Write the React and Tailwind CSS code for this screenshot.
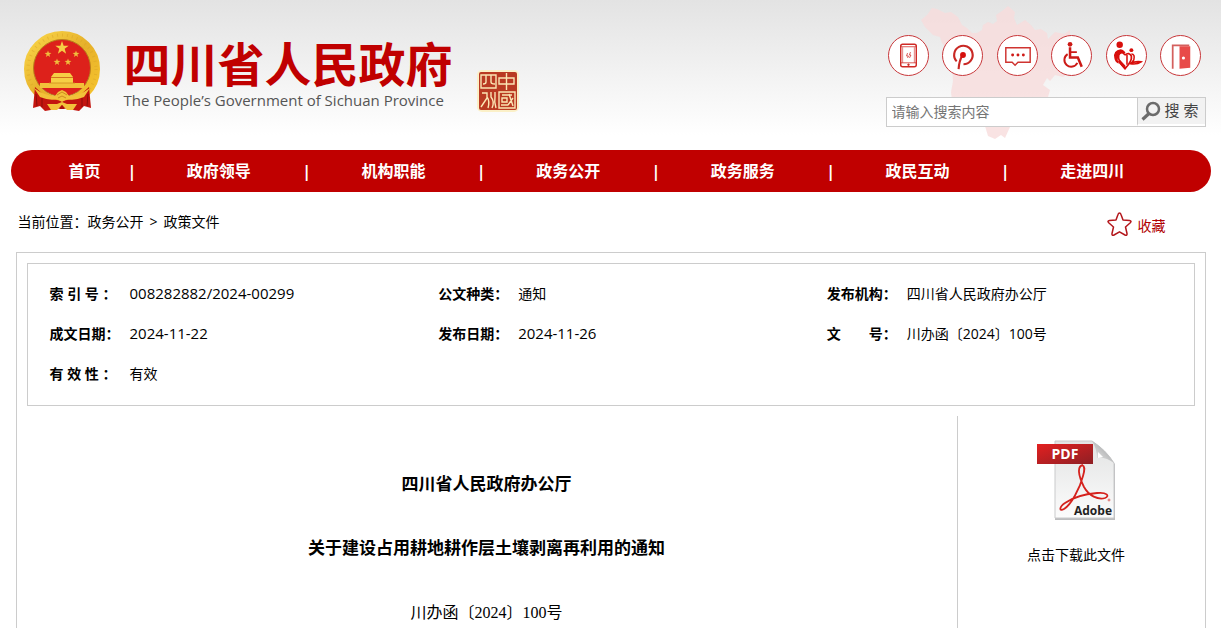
import React, { useState } from "react";

const navItems = ["政府领导", "机构职能", "政务公开", "政务服务", "政民互动", "走进四川"];

const infoRows = [
  [
    { label: "索 引 号 ：", value: "008282882/2024-00299", numeric: true },
    { label: "公文种类：", value: "通知" },
    { label: "发布机构：", value: "四川省人民政府办公厅" }
  ],
  [
    { label: "成文日期：", value: "2024-11-22", numeric: true },
    { label: "发布日期：", value: "2024-11-26", numeric: true },
    { label: "文　　号：", value: "川办函〔2024〕100号" }
  ],
  [{ label: "有 效 性 ：", value: "有效" }]
];

const starPoints = (cx, cy, r) => {
  const points = [];
  for (let i = 0; i < 10; i++) {
    const radius = i % 2 === 0 ? r : r * 0.4;
    const angle = (Math.PI / 5) * i - Math.PI / 2;
    points.push(`${cx + radius * Math.cos(angle)},${cy + radius * Math.sin(angle)}`);
  }
  return points.join(" ");
};

const Emblem = () => (
  <svg width="78" height="82" viewBox="0 0 78 82" aria-hidden="true">
    <defs>
      <linearGradient id="gold" x1="0" y1="0" x2="1" y2="1">
        <stop offset="0" stopColor="#f9d548" />
        <stop offset="0.5" stopColor="#e6b02a" />
        <stop offset="1" stopColor="#f7c52e" />
      </linearGradient>
    </defs>
    <circle cx="39" cy="39" r="33" fill="none" stroke="url(#gold)" strokeWidth="10" />
    <circle cx="39" cy="39" r="34" fill="none" stroke="#d9a326" strokeWidth="3" strokeDasharray="1 4" opacity="0.5" />
    <circle cx="39" cy="38" r="28.500" fill="#dd211b" stroke="#b8801b" strokeWidth="1" />
    <polygon points={starPoints(39, 18, 7)} fill="#f6cf45" />
    <polygon points={starPoints(25, 24, 3.6)} fill="#f0bd3d" />
    <polygon points={starPoints(53, 24, 3.6)} fill="#f0bd3d" />
    <polygon points={starPoints(34, 32, 3.6)} fill="#f0bd3d" />
    <polygon points={starPoints(45, 32, 3.6)} fill="#f0bd3d" />
    <path d="M31 43 H47 L50 47 H28 Z M28 48 H50 V53 H28 Z" fill="#f6cf45" />
    <path d="M17 53 H61 V58 H17 Z" fill="#f2c13a" />
    <path d="M28 47.500 H50 M26 53 H52" stroke="#cf8a20" strokeWidth="0.800" />
    <path d="M12 57 L10 78 L17 76 L22 81 L39 78 L56 81 L61 76 L68 78 L66 57 L54 68 L39 71 L24 68 Z" fill="#c3150f" />
    <path d="M13 64 L14 76 M19 68 L19 77 M59 68 L59 77 M65 64 L64 76" stroke="#8e0d0a" strokeWidth="1" />
    <path d="M11 58 Q22 66 32 66 L35 62 L39 60 L43 62 L46 66 Q56 66 67 58 L61 67 Q51 71 44 69 L39 72 L34 69 Q27 71 17 67 Z" fill="#f2c13a" />
    <path d="M34 65 L39 62 L44 65 M35 68 L39 66 L43 68" stroke="#cf8a20" strokeWidth="1" fill="none" />
    <path d="M24 74 L34 74 L39 72 L44 74 L54 74 L50 80 H44 L39 75 L34 80 H28 Z" fill="#f2c13a" />
    <path d="M36 79 L39 75 L42 79 Z" fill="#a90f0c" />
  </svg>
);

const Seal = () => (
  <svg width="42" height="42" viewBox="0 0 42 42" role="img" aria-label="中国四川">
    <rect width="42" height="42" rx="5" fill="#fbf0c8" />
    <rect x="2" y="2" width="38" height="38" rx="2" fill="#b93a22" />
    <g fill="none" stroke="#fbe6b4" strokeWidth="1.400">
      <path d="M4 5 H19 V18 H4 Z M9 5 V12 Q9 14 6 14 M14 5 V12 Q14 14 18 14" />
      <path d="M22 8 H37 V14 H22 Z M29.500 3 V20" />
      <path d="M5 23 H10 V28 Q8 31 4 37 M10 27 Q13 31 11 38 M14 22 V27 Q18 32 15 38 M18 22 V27 Q17 32 19 38" />
      <path d="M22 22 H38 V38 H22 Z M25 25 H35 M25 28 H30 V32 H25 Z M24 35 H31 M32 24 L36 36 M36 28 L31 35" />
    </g>
  </svg>
);

const ProvinceMap = () => (
  <svg width="150" height="136" viewBox="0 0 150 136" aria-hidden="true">
    <path
      d="M0 14 L6 9 L11 2 L16 3 L24 7 L30 6 L37 11 L41 19 L46 22 L51 27 L56 27 L61 24 L62 19 L67 16 L72 18 L76 15 L75 9 L81 5 L87 0 L94 6 L93 12 L96 19 L104 14 L110 19 L114 24 L120 23 L126 27 L127 33 L134 26 L143 28 L149 24 L149 66 L142 71 L134 69 L129 75 L126 72 L122 79 L129 84 L127 91 L112 92 L98 96 L92 108 L89 121 L84 132 L80 129 L74 133 L67 130 L64 120 L58 108 L45 99 L31 94 L30 86 L32 75 L31 61 L27 50 L27 44 L21 37 L19 31 L12 29 L4 21 Z"
      fill="#f8dcdc"
      opacity="0.800"
    />
  </svg>
);

const PhoneIcon = () => (
  <svg width="40" height="40" viewBox="0 0 40 40" fill="none" stroke="#cf2a26" aria-hidden="true">
    <rect x="12" y="8" width="16" height="23" rx="2" strokeWidth="1.500" />
    <path d="M12 10.500 H28 M12 27 H28" strokeWidth="0.800" />
    <path d="M14 11 V27 M26 11 V27" strokeWidth="0.600" />
    <path d="M19 17 L18 20 H20 L19 22 M22 16 L21 19 H22.500 L21 22" strokeWidth="0.800" />
    <circle cx="20" cy="29" r="0.800" fill="#cf2a26" />
  </svg>
);

const PodcastIcon = () => (
  <svg width="40" height="40" viewBox="0 0 40 40" fill="none" stroke="#c92824" aria-hidden="true">
    <path d="M14 25.500 A9.500 9.500 0 1 1 21 28.500" strokeWidth="2.200" />
    <path d="M20 19 Q16.500 25 16 33.500" strokeWidth="2.200" />
    <circle cx="20.500" cy="19" r="3" fill="#d6100d" stroke="none" />
  </svg>
);

const MessageIcon = () => (
  <svg width="40" height="40" viewBox="0 0 40 40" fill="none" stroke="#cf3431" aria-hidden="true">
    <path d="M8 11.500 H33 V26.500 H20.500 L17.500 29.500 L14.500 26.500 H8 Z" strokeWidth="1.500" />
    <g fill="#cf1a17" stroke="none">
      <circle cx="15" cy="19" r="1.500" />
      <circle cx="20.500" cy="19" r="1.500" />
      <circle cx="26" cy="19" r="1.500" />
    </g>
  </svg>
);

const WheelchairIcon = () => (
  <svg width="40" height="40" viewBox="0 0 40 40" fill="none" stroke="#cc1a16" aria-hidden="true">
    <circle cx="18.500" cy="8" r="2.400" fill="#cc1a16" stroke="none" />
    <path d="M18.500 11 V21.500 H26.500 L30.500 31" strokeWidth="2.600" />
    <path d="M19 16 H25.500" strokeWidth="1.800" />
    <path d="M16 18 A7 7 0 1 0 26 27" strokeWidth="2" />
  </svg>
);

const CareIcon = () => (
  <svg width="40" height="40" viewBox="0 0 40 40" fill="none" stroke="#d80f0c" aria-hidden="true">
    <circle cx="13" cy="8.500" r="3.300" fill="#d80f0c" stroke="none" />
    <circle cx="25" cy="14" r="2" fill="#d80f0c" stroke="none" />
    <path d="M14 13 Q6 14 7.500 22 Q8 26 12 28 L11 24 Q11 16 19 17 Q18 14 14 13 Z" fill="#d80f0c" stroke="none" />
    <path d="M18.500 19 Q14.500 13.500 12 19 Q10.500 25 18.500 33 Q26 25 25 20 Q22.500 15.500 18.500 19" strokeWidth="1.800" />
    <path d="M11 26 L18.500 34 L19 30 L13.500 24 Z" fill="#d80f0c" stroke="none" />
    <path d="M20.500 19 V29 M25 18 Q29 18 27.500 24 Q26 27 23 28 Q29 25 35 26 Q31 29 24 28" strokeWidth="1.600" />
  </svg>
);

const DoorIcon = () => (
  <svg width="40" height="40" viewBox="0 0 40 40" aria-hidden="true">
    <path d="M12 33 V9 H29" fill="none" stroke="#d4605e" strokeWidth="1.800" />
    <path d="M19 10 H30 V32 L19 33 Z" fill="#e84b49" />
    <circle cx="23" cy="22" r="1.600" fill="#fff" />
  </svg>
);

const quickLinks = [
  { name: "移动版", icon: <PhoneIcon /> },
  { name: "公众号", icon: <PodcastIcon /> },
  { name: "留言", icon: <MessageIcon /> },
  { name: "无障碍", icon: <WheelchairIcon /> },
  { name: "关怀版", icon: <CareIcon /> },
  { name: "登录", icon: <DoorIcon /> }
];

const PdfIcon = () => (
  <svg width="78" height="81" viewBox="0 0 78 81" aria-hidden="true">
    <defs>
      <linearGradient id="page" x1="0" y1="0" x2="0" y2="1">
        <stop offset="0" stopColor="#e2e3e3" />
        <stop offset="1" stopColor="#fcfcfc" />
      </linearGradient>
      <linearGradient id="banner" x1="0" y1="0" x2="1" y2="1">
        <stop offset="0" stopColor="#e32020" />
        <stop offset="1" stopColor="#8e1f24" />
      </linearGradient>
      <linearGradient id="fold" x1="0" y1="1" x2="1" y2="0">
        <stop offset="0" stopColor="#f3f3f3" />
        <stop offset="1" stopColor="#8f9192" />
      </linearGradient>
    </defs>
    <path d="M18 2 H55 L78 24 V80 H18 Z" fill="#bcbdbe" />
    <path d="M18 1 H55 Q69 10 77 23 V78 H18 Z" fill="url(#page)" stroke="#c9cacb" strokeWidth="1" />
    <path d="M55 1 Q60 9 60 18 Q69 17 77 23 Q69 10 55 1 Z" fill="url(#fold)" />
    <path d="M61 12 L66 17 L61 18 Z" fill="#fff" />
    <rect x="0" y="4" width="56" height="20" fill="url(#banner)" />
    <text x="28" y="19" textAnchor="middle" fontSize="14" fontWeight="700" fill="#fff" fontFamily="Open Sans, sans-serif">PDF</text>
    <path
      d="M46 25 C40 26 41 35 47 47 C52 56 61 60 68 58 C73 56 70 52 60 53 C48 54 35 58 28 63 C22 67 22 72 27 69 C34 65 43 48 46 36 C48 29 48 26 45 25"
      fill="none"
      stroke="#d5221d"
      strokeWidth="1.800"
    />
    <circle cx="72" cy="60" r="1" fill="none" stroke="#d5221d" strokeWidth="0.600" />
    <text x="75" y="75" textAnchor="end" fontSize="12" fontWeight="700" fill="#222" fontFamily="Open Sans, sans-serif">Adobe</text>
  </svg>
);

const Header = () => {
  const [keyword, setKeyword] = useState("");

  return (
    <header className="bg-linear-to-b from-[#e3e3e3] to-white to-90%">
      <div className="relative mx-auto flex h-[150px] max-w-[1200px] justify-between px-[5px]">
        {/* Logo */}
        <a href="#" className="flex items-start pt-[30px] pl-[7px]">
          <Emblem />
          <div className="ml-[23px] mt-2">
            <h1 className="text-[47px] leading-[52px] font-bold text-[#c00000]">四川省人民政府</h1>
            <p className="text-[15px] leading-5 text-[#555]">The People’s Government of Sichuan Province</p>
          </div>
          <span className="mt-10 ml-6">
            <Seal />
          </span>
        </a>

        <div className="absolute top-1.5 right-[140px]">
          <ProvinceMap />
        </div>

        {/* Quick links and search */}
        <div className="relative w-[320px] pt-[35px]">
          <ul className="flex justify-between pr-1 pl-0.5">
            {quickLinks.map((item) => (
              <li key={item.name}>
                <a
                  href="#"
                  aria-label={item.name}
                  className="flex size-[41px] items-center justify-center overflow-hidden rounded-full border border-[#c8373a] bg-white"
                >
                  {item.icon}
                </a>
              </li>
            ))}
          </ul>
          <form className="mt-[21px] flex h-[30px] border border-[#ccc] bg-white" onSubmit={(e) => e.preventDefault()}>
            <input
              type="text"
              aria-label="请输入搜索内容"
              placeholder="请输入搜索内容"
              value={keyword}
              onChange={(e) => setKeyword(e.target.value)}
              className="min-w-0 flex-1 px-[5px] text-sm outline-none placeholder:text-[#757575]"
            />
            <button
              type="submit"
              className="flex w-[68px] items-center gap-1 border-b-2 border-l border-b-white border-l-[#ccc] bg-[#f2f2f2] pl-[3px] text-[15px] text-[#444]"
            >
              <svg width="20" height="20" viewBox="0 0 20 20" fill="none" stroke="#6b6b6b" aria-hidden="true">
                <circle cx="12" cy="8" r="6" strokeWidth="2.500" />
                <path d="M8 12.500 L1.500 18.500" strokeWidth="3.200" />
              </svg>
              <span className="whitespace-nowrap">搜 索</span>
            </button>
          </form>
        </div>
      </div>
    </header>
  );
};

const NavBar = () => (
  <nav className="mx-auto w-full max-w-[1200px]">
    <ul className="flex h-[42px] items-center rounded-full bg-[#c00000] pr-[35px] pl-[31px] text-base font-bold text-white">
      <li className="w-[86px] text-center">
        <a href="#">首页</a>
      </li>
      {navItems.map((item) => (
        <li key={item} className="flex flex-1 items-center">
          <span className="w-2 text-center">|</span>
          <a href="#" className="flex-1 text-center">{item}</a>
        </li>
      ))}
    </ul>
  </nav>
);

const App = () => {
  return (
    <div lang="zh-CN" className="flex min-h-screen flex-col bg-white font-['Open_Sans','Noto_Sans_CJK_SC',sans-serif] text-sm text-black">
      <Header />
      <NavBar />

      <main className="mx-auto flex w-full max-w-[1200px] flex-1 flex-col px-[5px]">
        {/* Breadcrumb */}
        <div className="flex h-[60px] items-center justify-between pr-10 pl-0.5">
          <p className="flex">
            当前位置：<a href="#">政务公开</a>
            <span className="px-1.5">&gt;</span>
            <a href="#">政策文件</a>
          </p>
          <button className="flex items-center gap-1.5 pt-1 text-[#b00000]">
            <svg width="25" height="25" viewBox="0 0 25 25" fill="none" stroke="#b3161b" strokeWidth="1.500" strokeLinejoin="round" aria-hidden="true">
              <path d="M12.500 1 Q13.500 1 14 2.500 L16 8 L22.500 8.500 Q25 9 23.300 10.700 L18.500 15 L20 21.500 Q20.300 24 18 23 L12.500 19.800 L7 23 Q4.700 24 5 21.500 L6.500 15 L1.700 10.700 Q0 9 2.500 8.500 L9 8 L11 2.500 Q11.500 1 12.500 1 Z" />
            </svg>
            <span className="pt-1">收藏</span>
          </button>
        </div>

        <div className="flex flex-1 flex-col border border-b-0 border-[#ccc]">
          {/* Document information */}
          <div className="m-2.5 border border-[#ccc] pt-2.5 pb-[11px]">
            <table className="w-full table-fixed">
              <tbody>
                {infoRows.map((row, index) => (
                  <tr key={index}>
                    {row.map((item) => (
                      <td key={item.label} className="h-10 pl-[22px]">
                        <b className="inline-block w-20 whitespace-nowrap">{item.label}</b>
                        <span className={item.numeric ? "text-[15px]" : "text-sm"}>{item.value}</span>
                      </td>
                    ))}
                  </tr>
                ))}
              </tbody>
            </table>
          </div>

          <div className="flex flex-1">
            <article className="flex-1 pt-[37px] text-center font-['Liberation_Serif','Noto_Sans_CJK_SC',serif]">
              <h2 className="text-[17px] leading-[64px] font-bold">四川省人民政府办公厅</h2>
              <h2 className="text-[17px] leading-[64px] font-bold">关于建设占用耕地耕作层土壤剥离再利用的通知</h2>
              <p className="text-base leading-[64px]">川办函〔2024〕100号</p>
            </article>
            <aside className="mr-2.5 w-[238px] border-l border-[#ccc] pt-6">
              <a href="#" className="flex flex-col items-center gap-6">
                <PdfIcon />
                点击下载此文件
              </a>
            </aside>
          </div>
        </div>
      </main>
    </div>
  );
};

export default App;
